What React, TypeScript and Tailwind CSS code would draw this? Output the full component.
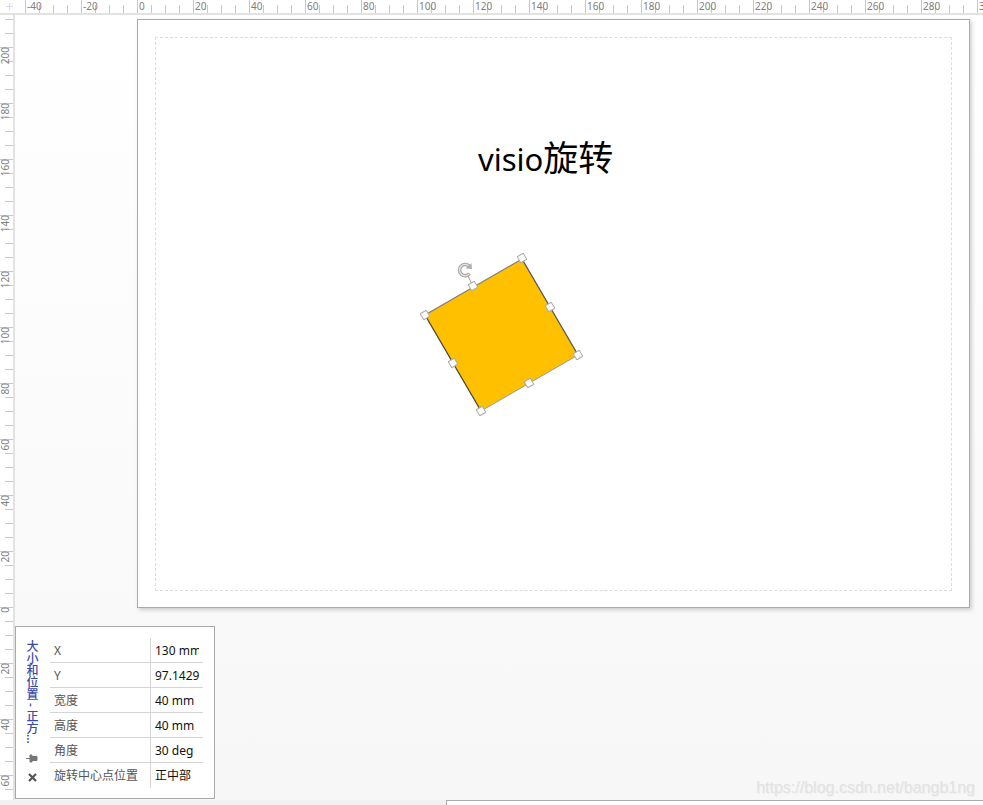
const hMajors = Array.from({ length: 18 }, (_, i) => -40 + i * 20);
const vMajors = [200, 180, 160, 140, 120, 100, 80, 60, 40, 20, 0, 20, 40, 60];

const rows = [
  ['X', '130 mm'],
  ['Y', '97.1429 mm'],
  ['宽度', '40 mm'],
  ['高度', '40 mm'],
  ['角度', '30 deg'],
  ['旋转中心点位置', '正中部'],
];

const handles = [
  [522, 258],
  [578, 355],
  [481, 411],
  [425, 315],
  [473, 286],
  [550, 307],
  [529, 383],
  [453, 363],
];

const TopRuler = () => (
  <div className="flex h-[15px] shrink-0 overflow-hidden border-b-2 border-[#e2e2e2] bg-white">
    <div className="relative w-[25px] shrink-0">
      <div className="absolute left-[6px] top-[6px] h-px w-[7px] bg-[#d5d8f5]" />
      <div className="absolute left-[9px] top-[3px] h-[7px] w-px bg-[#d5d8f5]" />
    </div>
    {hMajors.map((v) => (
      <div key={v} className="relative flex w-[56px] shrink-0">
        <span className="absolute left-[2px] top-0 text-[10px] leading-[12px] text-[#808080]">{v}</span>
        <div className="h-full w-[14px] border-l border-[#c8c8c8]" />
        <div className="mt-[5px] w-[14px] border-l border-[#c8c8c8]" />
        <div className="mt-[5px] w-[14px] border-l border-[#c8c8c8]" />
        <div className="mt-[5px] w-[14px] border-l border-[#c8c8c8]" />
      </div>
    ))}
  </div>
);

const LeftRuler = () => (
  <div className="flex w-[15px] shrink-0 flex-col overflow-hidden border-r-2 border-[#e2e2e2] bg-white pt-[4px]">
    <div className="ml-[5px] h-[14px] shrink-0 border-t border-[#c8c8c8]" />
    <div className="ml-[5px] h-[14px] shrink-0 border-t border-[#c8c8c8]" />
    {vMajors.map((v, i) => (
      <div key={i} className="relative flex h-[56px] shrink-0 flex-col">
        <span className="absolute left-0 top-0 rotate-180 text-[10px] leading-[10px] text-[#808080] [writing-mode:vertical-rl]">
          {v}
        </span>
        <div className="h-[14px] border-t border-[#c8c8c8]" />
        <div className="ml-[5px] h-[14px] border-t border-[#c8c8c8]" />
        <div className="ml-[5px] h-[14px] border-t border-[#c8c8c8]" />
        <div className="ml-[5px] h-[14px] border-t border-[#c8c8c8]" />
      </div>
    ))}
  </div>
);

const RotatedSquare = () => (
  <svg className="absolute left-[410px] top-[245px]" width="185" height="175" viewBox="410 245 185 175">
    <polygon points="522,259 578,355 481,411 425,315" fill="#ffc000" />
    <line x1="425" y1="315" x2="522" y2="259" stroke="#7a7a7a" strokeWidth="1.2" />
    <line x1="522" y1="259" x2="578" y2="355" stroke="#555" strokeWidth="1.3" />
    <line x1="425" y1="315" x2="481" y2="411" stroke="#444" strokeWidth="1.3" />
    <line x1="481" y1="411" x2="578" y2="355" stroke="#9a9a9a" strokeWidth="1" />
    <line x1="468" y1="276" x2="473" y2="286" stroke="#999" strokeWidth="1" />
    <path d="M469.5 266.5 A5.6 5.6 0 1 0 469.6 273.5" fill="none" stroke="#a8a8a8" strokeWidth="3.6" />
    <path d="M469.5 266.5 A5.6 5.6 0 1 0 469.6 273.5" fill="none" stroke="#e4e4e4" strokeWidth="1.2" />
    <path d="M465.5 268.5 L472 269 L471.5 263 Z" fill="#b0b0b0" />
    {handles.map(([x, y]) => (
      <rect
        key={`${x}-${y}`}
        x={x - 3.5}
        y={y - 3.5}
        width="7"
        height="7"
        rx="0.5"
        fill="#fff"
        stroke="#ababab"
        strokeWidth="1"
        transform={`rotate(-30 ${x} ${y})`}
      />
    ))}
  </svg>
);

const SizePanel = () => (
  <div className="absolute left-[15px] top-[626px] flex h-[173px] w-[200px] border border-[#a9a9a9] bg-white pl-[8px] pr-[10px] pt-[11px]">
    <div className="flex w-[26px] shrink-0 flex-col items-start">
      <div className="-ml-px mt-[2px] h-[108px] whitespace-nowrap text-[12px] font-medium leading-[16px] text-[#3a4aa8] [writing-mode:vertical-rl]">
        大小和位置 - 正方...
      </div>
      <svg className="ml-[2px] mt-[5px]" width="12" height="11" viewBox="0 0 12 11">
        <path d="M0 5.5H4M4 2H6V9H4ZM6 3.5H11V7.5H6Z" fill="#777" stroke="#777" strokeWidth="1" />
      </svg>
      <svg className="ml-[3px] mt-[8px]" width="11" height="11" viewBox="0 0 11 11">
        <path d="M2 2L9 9M9 2L2 9" stroke="#555" strokeWidth="2.2" />
      </svg>
    </div>
    <div className="h-[150px] w-[153px] shrink-0">
      {rows.map(([label, value], i) => (
        <div key={label} className={`flex h-[25px] ${i < 5 ? 'border-b border-[#d4d4d4]' : ''}`}>
          <div className="w-[101px] shrink-0 border-r border-[#d4d4d4] pl-[4px] pt-px text-[12px] leading-[24px] text-[#555]">
            {label}
          </div>
          <div className="w-[48px] shrink-0 overflow-hidden whitespace-nowrap pl-[4px] pt-px text-[12px] leading-[24px] text-[#111]">
            {value}
          </div>
        </div>
      ))}
    </div>
  </div>
);

export default function App() {
  return (
    <div className="relative flex h-[805px] w-[983px] flex-col overflow-hidden bg-white font-['Noto_Sans','Noto_Sans_CJK_SC',sans-serif]">
      <TopRuler />
      <div className="flex min-h-0 flex-1 overflow-hidden">
        <LeftRuler />
        <div className="flex-1 bg-gradient-to-b from-white to-[#f7f7f7] pl-[122px] pt-[4px]">
          {/* Page with dashed print margin */}
          <div className="h-[589px] w-[833px] border border-[#a9a9ae] bg-white pb-[16px] pl-[17px] pr-[17px] pt-[17px] shadow-[2px_2px_4px_rgba(0,0,0,0.18)]">
            <div className="h-full w-full border border-dashed border-[#dcdcdc]" />
          </div>
        </div>
      </div>

      {/* Bottom scroll strip */}
      <div className="flex h-[5px] shrink-0">
        <div className="w-[446px] bg-[#f1f1f1]" />
        <div className="flex-1 border-l border-t border-[#a9a9a9] bg-white" />
      </div>

      <div className="absolute left-[478px] top-[136px] whitespace-nowrap text-[31px] leading-[44px] text-black">
        visio<span className="text-[35px]">旋转</span>
      </div>
      <RotatedSquare />
      <SizePanel />

      <div className="absolute right-[8px] top-[778px] whitespace-nowrap font-['Liberation_Sans',sans-serif] text-[16px] leading-[20px] text-[#e2e2e2] [text-shadow:1px_1px_1px_#eee]">
        https://blog.csdn.net/bangb1ng
      </div>
    </div>
  );
}
